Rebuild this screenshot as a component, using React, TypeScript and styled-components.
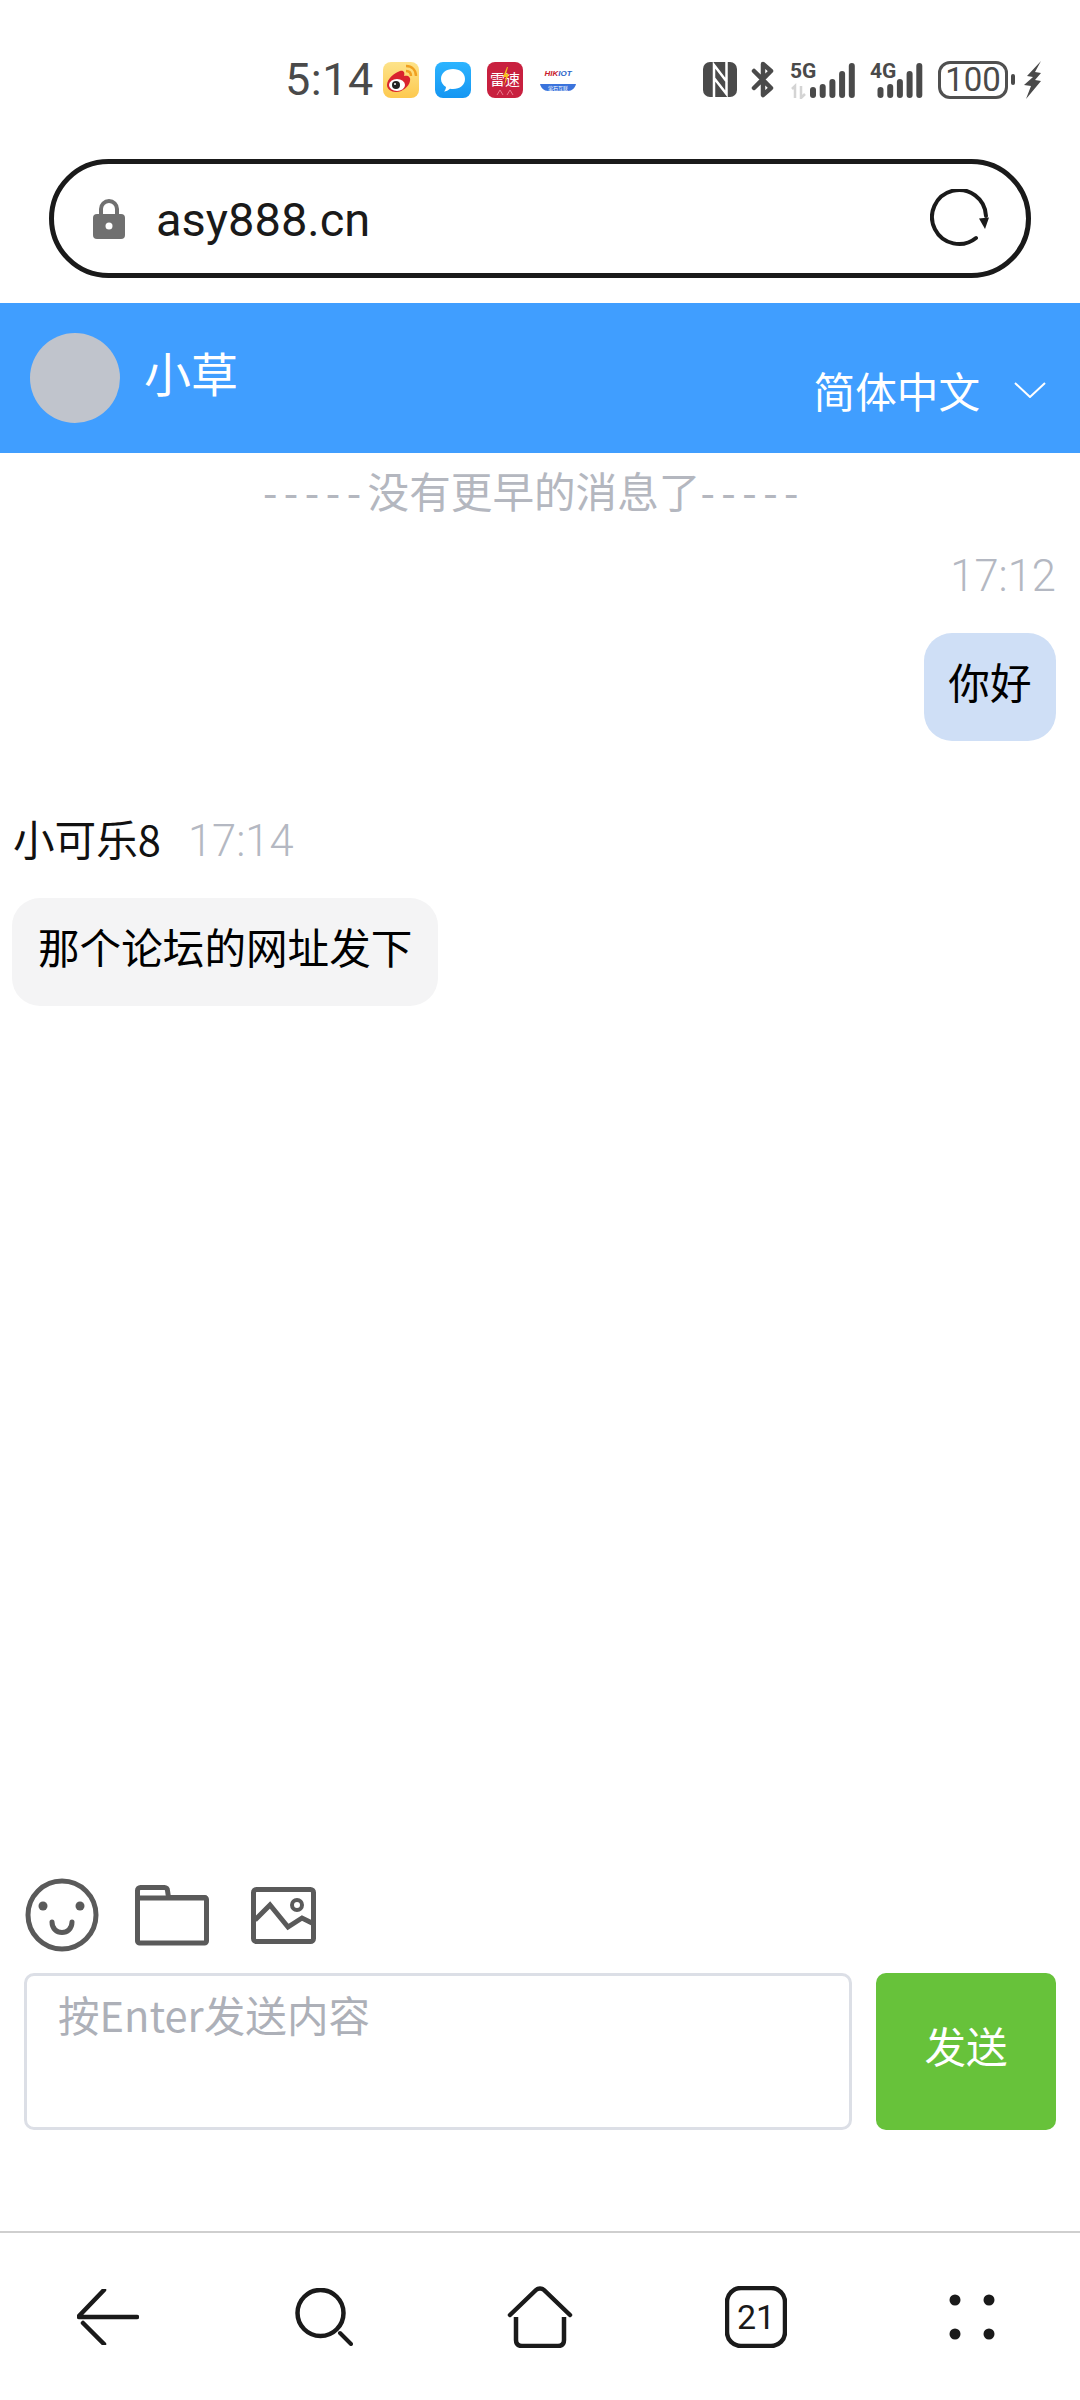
import React from 'react';
import styled, { createGlobalStyle } from 'styled-components';

const GlobalStyle = createGlobalStyle`
	html, body {
		margin: 0;
		padding: 0;
		background: #ffffff;
	}
	* {
		box-sizing: border-box;
	}
	body {
		font-family: "Noto Sans CJK SC", "Noto Sans", sans-serif;
	}
`;

const Page = styled.div`
	width: 1080px;
	height: 2400px;
	display: flex;
	flex-direction: column;
	background: #ffffff;
	overflow: hidden;
`;

const StatusBar = styled.div`
	height: 159px;
	display: flex;
	align-items: center;
	padding: 0 38px 0 285px;
	color: #4a4a4a;
`;

const Clock = styled.div`
	width: 98px;
	font-family: Roboto, sans-serif;
	font-size: 45px;
	line-height: 50px;
	letter-spacing: 0.5px;
`;

const AppIcons = styled.div`
	display: flex;
	align-items: center;
	gap: 16px;
`;

const StatusIcons = styled.div`
	margin-left: auto;
	display: flex;
	align-items: center;
`;

const NetLabel = styled.div<{ $gap: number }>`
	position: relative;
	display: flex;
	align-items: flex-end;
	margin-left: ${(p) => p.$gap}px;
`;

const NetText = styled.span`
	position: absolute;
	top: 0;
	left: 1px;
	font-family: Roboto, sans-serif;
	font-size: 21px;
	font-weight: 700;
	line-height: 20px;
	color: #4a4a4a;
`;

const Battery = styled.div`
	width: 70px;
	height: 38px;
	margin-left: 15px;
	border: 3.5px solid #505050;
	border-radius: 12px;
	display: flex;
	align-items: center;
	justify-content: center;
	font-family: Roboto, sans-serif;
	font-size: 33px;
	line-height: 31px;
	color: #4a4a4a;
`;

const BatteryNub = styled.div`
	width: 4px;
	height: 11px;
	margin-left: 3px;
	border-radius: 2px;
	background: #4a4a4a;
`;

const AddressBar = styled.div`
	height: 119px;
	margin: 0 49px 25px 49px;
	padding: 0 36px 0 39px;
	border: 5px solid #1a1a1a;
	border-radius: 60px;
	display: flex;
	align-items: center;
`;

const Url = styled.div`
	margin-left: 31px;
	padding-top: 2px;
	font-family: Roboto, sans-serif;
	font-size: 47px;
	line-height: 60px;
	color: #1a1a1a;
	flex: 1;
`;

const ChatHeader = styled.div`
	height: 150px;
	background: #409eff;
	display: flex;
	align-items: center;
	padding: 0 34px 0 30px;
	color: #ffffff;
`;

const Avatar = styled.div`
	width: 90px;
	height: 90px;
	border-radius: 50%;
	background: #c0c4cc;
`;

const PeerName = styled.div`
	margin-left: 24px;
	margin-bottom: 12px;
	font-size: 47px;
	line-height: 60px;
`;

const Language = styled.div`
	margin-left: auto;
	margin-top: 24px;
	display: flex;
	align-items: center;
	gap: 34px;
	font-size: 41.6px;
	line-height: 56px;
`;

const ChatBody = styled.div`
	flex: 1;
	padding: 0 24px 0 12px;
	display: flex;
	flex-direction: column;
`;

const Notice = styled.div`
	height: 80px;
	display: flex;
	align-items: center;
	justify-content: center;
	padding-bottom: 6px;
	font-size: 41.6px;
	color: #b4b7bf;
`;

const Dashes = styled.span`
	letter-spacing: 6.5px;
`;

const MessageGroup = styled.div<{ $mine?: boolean }>`
	display: flex;
	flex-direction: column;
	align-items: ${(p) => (p.$mine ? 'flex-end' : 'flex-start')};
	margin-top: ${(p) => (p.$mine ? '18px' : '75px')};
`;

const MetaRow = styled.div`
	height: 50px;
	display: flex;
	align-items: center;
`;

const Sender = styled.span`
	margin-left: 1px;
	margin-right: 27px;
	margin-bottom: 6px;
	font-size: 41.6px;
	color: #111111;
`;

const Time = styled.span`
	font-family: Roboto, sans-serif;
	font-weight: 300;
	font-size: 43.5px;
	color: #b4b8c2;
`;

const Bubble = styled.div<{ $mine?: boolean }>`
	margin-top: 32px;
	height: 108px;
	padding: 0 ${(p) => (p.$mine ? '24.5px' : '26px')} 13px;
	display: flex;
	align-items: center;
	border-radius: 28px;
	font-size: 41.6px;
	color: #000000;
	background: ${(p) => (p.$mine ? '#cfdff6' : '#f4f4f5')};
`;

const Composer = styled.div`
	padding: 0 24px 101px 24px;
`;

const ToolRow = styled.div`
	height: 96px;
	display: flex;
	align-items: flex-start;
`;

const ToolButton = styled.div<{ $left: number; $top: number }>`
	margin-left: ${(p) => p.$left}px;
	margin-top: ${(p) => p.$top}px;
	display: flex;
`;

const InputRow = styled.div`
	display: flex;
	gap: 24px;
`;

const MessageInput = styled.textarea`
	width: 828px;
	height: 157px;
	padding: 11px 31px;
	border: 3px solid #dcdfe6;
	border-radius: 10px;
	outline: none;
	resize: none;
	font-family: "Noto Sans CJK SC", sans-serif;
	font-size: 41.6px;
	line-height: 54px;
	&::placeholder {
		color: #adb0b8;
		opacity: 1;
	}
`;

const SendButton = styled.button`
	width: 180px;
	height: 157px;
	border: none;
	border-radius: 10px;
	background: #67c23a;
	color: #ffffff;
	font-family: "Noto Sans CJK SC", sans-serif;
	font-size: 41.6px;
	padding: 0 0 14px 0;
`;

const BottomNav = styled.div`
	height: 169px;
	border-top: 2px solid #cfcfcf;
	display: grid;
	grid-template-columns: repeat(5, 216px);
	align-items: center;
	justify-items: center;
`;

const STATUS_GREY = '#4a4a4a';
const TOOL_GREY = '#5a5a5a';
const NAV_DARK = '#1a1a1a';
const BAR_HEIGHTS = [11, 14, 19, 27, 35];

const WeiboIcon = () => (
	<svg width="36" height="36" viewBox="0 0 36 36">
		<defs>
			<linearGradient id="wb" x1="0" y1="0" x2="0" y2="1">
				<stop offset="0" stopColor="#fde38a" />
				<stop offset="1" stopColor="#fdc94f" />
			</linearGradient>
		</defs>
		<rect width="36" height="36" rx="8" fill="url(#wb)" />
		<path d="M4 23c0-6 7-12 13-14 4-1 5 2 4 5 4-1 7 1 6 5-1 6-8 11-14 11-5 0-9-3-9-7z" fill="#d9232e" />
		<ellipse cx="14" cy="23" rx="8" ry="6" fill="#ffffff" />
		<circle cx="13" cy="23" r="4" fill="#222222" />
		<circle cx="12" cy="22" r="1" fill="#ffffff" />
		<path d="M23 9c3 0 5 2 5 5M23 4c6 0 10 4 10 10" fill="none" stroke="#f0a020" strokeWidth="2.4" />
	</svg>
);

const BubbleAppIcon = () => (
	<svg width="36" height="36" viewBox="0 0 36 36">
		<defs>
			<linearGradient id="msg" x1="0" y1="0" x2="0" y2="1">
				<stop offset="0" stopColor="#2cb4ff" />
				<stop offset="1" stopColor="#1596f2" />
			</linearGradient>
		</defs>
		<rect width="36" height="36" rx="8" fill="url(#msg)" />
		<path d="M18 7c7 0 12 4 12 10s-5 10-12 10c-1 0-2 0-3-.2-1.500 1.500-4 2.700-6 2.700 1-1 1.800-2.500 2-4.500-3-1.800-5-4.600-5-8C6 11 11 7 18 7z" fill="#ffffff" />
	</svg>
);

const LeisuIcon = () => (
	<svg width="36" height="36" viewBox="0 0 36 36">
		<rect width="36" height="36" rx="8" fill="#c8203f" />
		<text x="18" y="23" textAnchor="middle" fontSize="15" fill="#ffffff" fontFamily="Noto Sans CJK SC">雷速</text>
		<path d="M20 5l-4 10h3l-2 9 5-12h-3l2-7z" fill="#f6c21c" />
		<path d="M10 33l3-5 3 5M20 33l3-5 3 5" fill="none" stroke="#e8798c" strokeWidth="1" />
	</svg>
);

const HikIcon = () => (
	<svg width="38" height="24" viewBox="0 0 38 24">
		<text x="19" y="8" textAnchor="middle" fontSize="8" fontWeight="700" fontStyle="italic" fontFamily="Liberation Sans" fill="#c8202c">
			HIK<tspan fill="#2a62c8">IOT</tspan>
		</text>
		<path d="M1 16h36c-1 4-4 7-8 7H9c-4 0-7-3-8-7z" fill="#3a73dc" />
		<text x="19" y="22" textAnchor="middle" fontSize="5" fill="#ffffff" fontFamily="Noto Sans CJK SC">萤石互联</text>
	</svg>
);

const NfcIcon = () => (
	<svg width="34" height="35" viewBox="0 0 34 35">
		<rect width="34" height="35" rx="7" fill={STATUS_GREY} />
		<path d="M11 36V3L24 20M23.500 -1V32L11 16" fill="none" stroke="#ffffff" strokeWidth="2.500" />
	</svg>
);

const BluetoothIcon = () => (
	<svg width="23" height="37" viewBox="0 0 23 37" style={{ marginLeft: 14 }}>
		<path d="M3 10l17 17-8 7V3l8 7L3 27" fill="none" stroke={STATUS_GREY} strokeWidth="4.500" strokeLinejoin="round" strokeLinecap="round" />
	</svg>
);

const FiveGBars = () => (
	<svg width="66" height="38" viewBox="0 0 66 38">
		<path d="M3 28l3-3v12M12 25v12l4-4" fill="none" stroke="#d4d4d4" strokeWidth="2.500" />
		{BAR_HEIGHTS.map((h, i) => (
			<rect key={i} x={21 + i * 9.700} y={37 - h} width="6" height={h} rx="3" fill={STATUS_GREY} />
		))}
	</svg>
);

const FourGBars = () => (
	<svg width="54" height="38" viewBox="0 0 54 38">
		{BAR_HEIGHTS.map((h, i) => (
			<rect key={i} x={8.500 + i * 9.700} y={37 - h} width="6" height={h} rx="3" fill={STATUS_GREY} />
		))}
	</svg>
);

const BoltIcon = () => (
	<svg width="18" height="38" viewBox="0 0 18 38" style={{ marginLeft: 9 }}>
		<path d="M17 0L3 15l6 1-9 8 7 1-5 13 15-18-6-1 6-7-6-1z" fill={STATUS_GREY} />
	</svg>
);

const LockIcon = () => (
	<svg width="32" height="40" viewBox="0 0 32 40">
		<path d="M8 17V10a8 8 0 0 1 16 0v7" fill="none" stroke="#707070" strokeWidth="4" />
		<rect y="15" width="32" height="25" rx="4" fill="#707070" />
		<circle cx="16" cy="27" r="3.500" fill="#ffffff" />
	</svg>
);

const ReloadIcon = () => (
	<svg width="60" height="60" viewBox="11 10 60 60">
		<path d="M57 59A27 27 0 1 1 67 37" fill="none" stroke={NAV_DARK} strokeWidth="4" strokeLinecap="round" />
		<path d="M60 39.500L70 38.500L66 50z" fill={NAV_DARK} />
	</svg>
);

const ChevronIcon = () => (
	<svg width="32" height="16" viewBox="0 0 32 16">
		<path d="M1 1l15 14L31 1" fill="none" stroke="#ffffff" strokeWidth="2" />
	</svg>
);

const SmileIcon = () => (
	<svg width="74" height="74" viewBox="0 0 74 74">
		<circle cx="37" cy="37" r="34" fill="none" stroke={TOOL_GREY} strokeWidth="5" />
		<circle cx="18" cy="28" r="4.500" fill={TOOL_GREY} />
		<circle cx="55" cy="28" r="4.500" fill={TOOL_GREY} />
		<path d="M27 44c0 14 20 14 20 0" fill="none" stroke={TOOL_GREY} strokeWidth="5" strokeLinecap="round" />
	</svg>
);

const FolderIcon = () => (
	<svg width="74" height="61" viewBox="0 0 74 61">
		<path d="M2.500 56V5.500a3 3 0 0 1 3-3h24a3 3 0 0 1 3 3l1 7h36a2 2 0 0 1 2 2V56a2 2 0 0 1-2 2H5a2 2 0 0 1-2.500-2z" fill="none" stroke={TOOL_GREY} strokeWidth="5" strokeLinejoin="round" />
		<path d="M2.500 13h69" stroke={TOOL_GREY} strokeWidth="5" />
	</svg>
);

const ImageIcon = () => (
	<svg width="65" height="57" viewBox="0 0 65 57">
		<rect x="2.500" y="2.500" width="60" height="52" rx="3" fill="none" stroke={TOOL_GREY} strokeWidth="5" />
		<path d="M4 33L19 18L37 40L51 31L61 36" fill="none" stroke={TOOL_GREY} strokeWidth="5" />
		<circle cx="46" cy="18" r="5" fill="none" stroke={TOOL_GREY} strokeWidth="4" />
	</svg>
);

const BackIcon = () => (
	<svg width="62" height="56" viewBox="0 0 62 56">
		<path d="M27 1L2 27M2 28H60M6 34L27 55" fill="none" stroke={NAV_DARK} strokeWidth="4.500" strokeLinecap="round" />
	</svg>
);

const SearchIcon = () => (
	<svg width="58" height="58" viewBox="0 0 58 58">
		<circle cx="25.500" cy="25" r="23" fill="none" stroke={NAV_DARK} strokeWidth="4.500" />
		<path d="M45 45l11 11" fill="none" stroke={NAV_DARK} strokeWidth="4" strokeLinecap="round" />
	</svg>
);

const HomeIcon = () => (
	<svg width="66" height="62" viewBox="0 0 66 62">
		<path d="M3 29L29 4c2-2 6-2 8 0l26 25" fill="none" stroke={NAV_DARK} strokeWidth="4.500" strokeLinecap="round" />
		<path d="M9 31v23c0 4 2 6 6 6h36c4 0 6-2 6-6V31" fill="none" stroke={NAV_DARK} strokeWidth="4.500" />
	</svg>
);

const TabsIcon = () => (
	<svg width="62" height="62" viewBox="0 0 62 62">
		<rect x="2" y="2" width="58" height="58" rx="14" fill="none" stroke={NAV_DARK} strokeWidth="4.500" />
		<text x="31" y="43" textAnchor="middle" fontSize="34" fontFamily="Roboto" fill={NAV_DARK}>21</text>
	</svg>
);

const DotsIcon = () => (
	<svg width="46" height="46" viewBox="0 0 46 46">
		<circle cx="6" cy="6" r="5.500" fill={NAV_DARK} />
		<circle cx="40" cy="6" r="5.500" fill={NAV_DARK} />
		<circle cx="6" cy="40" r="5.500" fill={NAV_DARK} />
		<circle cx="40" cy="40" r="5.500" fill={NAV_DARK} />
	</svg>
);

const App = () => {
	return (
		<Page>
			<GlobalStyle />
			<StatusBar>
				<Clock>5:14</Clock>
				<AppIcons>
					<WeiboIcon />
					<BubbleAppIcon />
					<LeisuIcon />
					<HikIcon />
				</AppIcons>
				<StatusIcons>
					<NfcIcon />
					<BluetoothIcon />
					<NetLabel $gap={15}>
						<NetText>5G</NetText>
						<FiveGBars />
					</NetLabel>
					<NetLabel $gap={14}>
						<NetText>4G</NetText>
						<FourGBars />
					</NetLabel>
					<Battery>100</Battery>
					<BatteryNub />
					<BoltIcon />
				</StatusIcons>
			</StatusBar>

			<AddressBar>
				<LockIcon />
				<Url>asy888.cn</Url>
				<ReloadIcon />
			</AddressBar>

			<ChatHeader>
				<Avatar />
				<PeerName>小草</PeerName>
				<Language>
					简体中文
					<ChevronIcon />
				</Language>
			</ChatHeader>

			<ChatBody>
				<Notice>
					<Dashes>-----</Dashes>没有更早的消息了<Dashes>-----</Dashes>
				</Notice>
				<MessageGroup $mine>
					<MetaRow>
						<Time>17:12</Time>
					</MetaRow>
					<Bubble $mine>你好</Bubble>
				</MessageGroup>
				<MessageGroup>
					<MetaRow>
						<Sender>小可乐8</Sender>
						<Time>17:14</Time>
					</MetaRow>
					<Bubble>那个论坛的网址发下</Bubble>
				</MessageGroup>
			</ChatBody>

			<Composer>
				<ToolRow>
					<ToolButton $left={1} $top={1}>
						<SmileIcon />
					</ToolButton>
					<ToolButton $left={36} $top={8}>
						<FolderIcon />
					</ToolButton>
					<ToolButton $left={42} $top={10}>
						<ImageIcon />
					</ToolButton>
				</ToolRow>
				<InputRow>
					<MessageInput placeholder="按Enter发送内容" />
					<SendButton>发送</SendButton>
				</InputRow>
			</Composer>

			<BottomNav>
				<BackIcon />
				<SearchIcon />
				<HomeIcon />
				<TabsIcon />
				<DotsIcon />
			</BottomNav>
		</Page>
	);
};

export default App;
